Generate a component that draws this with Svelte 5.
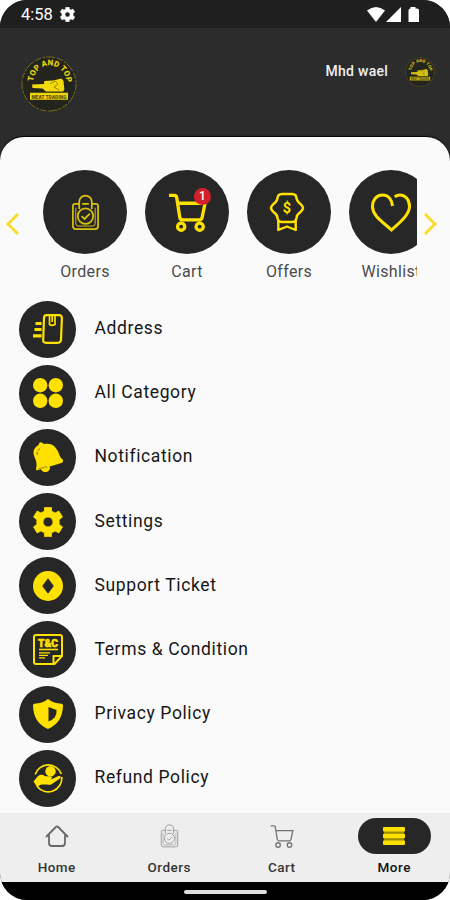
<script>
  const shortcuts = [
    { label: 'Orders', icon: 'bag' },
    { label: 'Cart', icon: 'cart', badge: 1 },
    { label: 'Offers', icon: 'offer' },
    { label: 'Wishlist', icon: 'heart' }
  ];
  const rows = [
    { label: 'Address', icon: 'address' },
    { label: 'All Category', icon: 'category' },
    { label: 'Notification', icon: 'bell' },
    { label: 'Settings', icon: 'gear' },
    { label: 'Support Ticket', icon: 'ticket' },
    { label: 'Terms & Condition', icon: 'terms' },
    { label: 'Privacy Policy', icon: 'shield' },
    { label: 'Refund Policy', icon: 'refund' }
  ];
  const tabs = [
    { label: 'Home', icon: 'home' },
    { label: 'Orders', icon: 'bag' },
    { label: 'Cart', icon: 'cart' },
    { label: 'More', icon: 'more', active: true }
  ];
</script>

{#snippet logo(id, size)}
  <svg width={size} height={size} viewBox="0 0 56 56">
    <circle cx="28" cy="28" r="27" fill="#24241f" stroke="#8d8313" stroke-width=".8" stroke-dasharray="6 1.5 3 1 9 2" />
    <path {id} d="M12.2 25.5 A16.500 16.500 0 0 1 45.200 26.500" fill="none" />
    <text font-family="Roboto, sans-serif" font-weight="900" font-size="8" fill="#e5d012" text-anchor="middle"><textPath href="#{id}" startOffset="50%">TOP AND TOP</textPath></text>
    <path d="M11 28.500l12-.6.300-2.900 8.700-.600 8.500-2 2 2.500.800 8-1 2.600H25l-3.500-3-10-.4z" fill="#f2db08" />
    <path d="M29 28l5-3 3 3-4 3 5 3" fill="none" stroke="#94880f" stroke-width="1" />
    <path d="M9 36.800h38v7H9z" fill="#edd60a" />
    <text x="28" y="42.700" font-family="Roboto, sans-serif" font-weight="900" font-size="6.200" fill="#5b5311" text-anchor="middle" textLength="35" lengthAdjust="spacingAndGlyphs">MEAT TRADING</text>
  </svg>
{/snippet}

{#snippet glyph(name)}
  {#if name === 'bag'}
    <svg class="bag" viewBox="0 0 30 38" fill="none" stroke="currentColor" stroke-width="1.800">
      <path d="M9 10H4.200Q2 10 2 12.200V33q0 3.200 3.200 3.200h19.600q3.200 0 3.200-3.200V12.200Q28 10 25.800 10H21M11.500 10h7" />
      <path d="M5 14v16.500Q5 33 7.500 33h15q2.500 0 2.500-2.500V14" stroke-width="1" />
      <path d="M8.500 15.500V8a6.500 6.500 0 0 1 13 0v7.500" />
      <circle cx="15" cy="22.700" r="8" />
      <path d="m11 22.700 3 3 5.500-5.500" />
    </svg>
  {:else if name === 'cart'}
    <svg class="cart" viewBox="0 0 40 40" fill="none" stroke="currentColor">
      <path d="M1 3h5.500q2 0 2.400 2L12 25q.4 3 3 3h17q2.500 0 3-2.500L38 11H10" />
      <circle cx="13.500" cy="35" r="3.700" /><circle cx="32.500" cy="35" r="3.700" />
    </svg>
  {:else if name === 'offer'}
    <svg class="offer" width="36" height="40" viewBox="0 0 36 40" fill="none" stroke="currentColor" stroke-width="2.500" stroke-linejoin="round">
      <path d="M13 2h10c3.500 0 4 1.500 4.600 4.500.3 2 1 3 2.400 4.200 2.300 1.900 4 3.300 4 5.300s-1.700 3.400-4 5.300c-1.400 1.200-2.100 2.200-2.400 4.200-.6 3-1.100 4.500-4.600 4.500H13c-3.500 0-4-1.500-4.600-4.500-.3-2-1-3-2.400-4.200C3.700 19.400 2 18 2 16s1.700-3.400 4-5.300c1.400-1.200 2.100-2.200 2.400-4.200C9 3.500 9.500 2 13 2z" />
      <path d="M9.300 29v9l8.700-3.500 8.700 3.500v-9" stroke-width="2.400" />
      <text x="18" y="21.300" text-anchor="middle" font-family="Roboto, sans-serif" font-weight="700" font-size="14.500" fill="currentColor" stroke="none">$</text>
    </svg>
  {:else if name === 'heart'}
    <svg width="40" height="40" viewBox="0 0 40 40" fill="none" stroke="currentColor" stroke-width="3">
      <path d="M21.500 14c-.5-5-3-11-10-11-6.500 0-10 5.500-10 11.500C1.500 24 12 30 20.500 38 28 31 38.500 23 38.500 14.500 38.500 8 34.500 3 29 3c-2 0-3.800.6-5.300 1.900" />
    </svg>
  {:else if name === 'address'}
    <svg width="30" height="30" viewBox="0 0 30 30" fill="none" stroke="currentColor" stroke-width="2.200">
      <path d="M13.500 1.200H26q3 0 2.900 3L28 25.800q-.2 3-3.200 3H13q-3 0-2.800-3L11 4.200q.1-3 2.500-3z" />
      <path d="M16.500 1v9.500q2.500 1.800 5.500 0V1M19.200 1v7" stroke-width="1.700" />
      <path d="M2.500 9.500h6M1.500 15.500h7M0 21.800h8.500" stroke-width="3.200" />
    </svg>
  {:else if name === 'category'}
    <svg width="30" height="30" viewBox="0 0 30 30" fill="currentColor">
      <circle cx="7.200" cy="7.200" r="7.200" /><circle cx="22.800" cy="7.200" r="7.200" /><circle cx="7.200" cy="22.800" r="7.200" /><circle cx="22.800" cy="22.800" r="7.200" />
    </svg>
  {:else if name === 'bell'}
    <svg width="30" height="30" viewBox="0 0 30 30" fill="currentColor">
      <path d="M6 1.500Q7.500-.6 9.500 1l1.500 1c7-1.500 12 2 14.500 8.500 1.200 3.500 2 5.200 4.200 7 1 1.600.3 3-1.400 3.500L5.500 28C3.500 28.500 2.500 27.500 3.200 26c.8-4 .3-6.500-1.500-10.500C-1 9.500 1 5.500 5.500 3z" />
      <path d="M8 27 17 24.600C17.500 31 9.500 32 8 27z" />
      <path d="M4.500 13C3.500 10 4.500 7.800 8 6" fill="none" stroke="#58510d" stroke-width=".9" stroke-dasharray="3 1.500" />
      <path d="M5 27l9-2.600" fill="none" stroke="#8a7e0c" stroke-width=".8" />
    </svg>
  {:else if name === 'gear'}
    <svg width="30" height="30" viewBox="0 0 30 30">
      <path fill="currentColor" fill-rule="evenodd" stroke="currentColor" stroke-width=".8" stroke-linejoin="round" d="M11.500.400h7v3.800c1.200.4 2.300 1 3.400 1.900l4-2 3.600 6-3.500 2.700a11 11 0 0 1 0 4.400l3.500 2.700-3.600 6-4-2c-1 .9-2.200 1.500-3.400 1.900v3.800h-7v-3.800a11 11 0 0 1-3.400-1.900l-4 2-3.600-6L4 17.200a11 11 0 0 1 0-4.400L.5 10.100l3.600-6 4 2c1-.9 2.200-1.500 3.400-1.900zM15 10a5 5 0 1 0 0 10 5 5 0 0 0 0-10z" />
    </svg>
  {:else if name === 'ticket'}
    <svg width="30" height="30" viewBox="0 0 30 30">
      <circle cx="15" cy="15" r="15" fill="currentColor" />
      <path d="M15 7.300 20.800 15 15 22.700 9.200 15z" fill="#272727" />
    </svg>
  {:else if name === 'terms'}
    <svg width="30" height="31" viewBox="0 0 30 31" fill="none" stroke="currentColor" stroke-width="2">
      <path d="M3 1h24q2 0 2 2v19l-7.500 8H3q-2 0-2-2V3q0-2 2-2zM20.500 29.500V22H29" stroke-linejoin="round" />
      <path d="M6 15.500h19" stroke-width="1.600" /><path d="M6 18.800h11M6 21.300h9M6 23.800h6" stroke-width="1.200" />
      <text x="15" y="12.500" text-anchor="middle" textLength="20" lengthAdjust="spacingAndGlyphs" font-family="Roboto, sans-serif" font-size="10" font-weight="900" fill="currentColor" stroke="currentColor" stroke-width=".5">T&amp;C</text>
    </svg>
  {:else if name === 'shield'}
    <svg width="30" height="30" viewBox="0 0 30 30">
      <path d="M15 0c4 3.300 8 4.500 13.500 4.700 1 0 1.500.8 1.500 2C29.600 18 25 25.500 15 30 5 25.500.4 18 0 6.700c0-1.200.5-2 1.500-2C7 4.500 11 3.300 15 0z" fill="currentColor" />
      <path d="M15.500 8 23.500 11q.3 4.800-1.700 7.300-2 2.400-6.300 4.300z" fill="#272727" />
    </svg>
  {:else if name === 'refund'}
    <svg width="30" height="30" viewBox="0 0 30 30" fill="none" stroke="currentColor">
      <path d="M2.200 11.500A13.800 13.800 0 0 1 28.300 11M28.800 14A13.800 13.800 0 0 1 4 23.300" stroke-width="1.700" />
      <circle cx="17.500" cy="8.300" r="5.200" fill="currentColor" stroke="none" />
      <path d="M.5 18.500 5 13c3-2 5-1.500 7.500.3h5c2 .2 2 2.300 0 2.800h-4 5.500l6.500-3c2-.7 3.200.8 1.500 2.300l-8 5.600c-1.500 1-3 1-5 .5H8l-4 2.500z" fill="currentColor" stroke="none" />
    </svg>
  {:else if name === 'home'}
    <svg width="24" height="22" viewBox="0 0 24 22" fill="none" stroke="#686868" stroke-width="1.800" stroke-linecap="round" stroke-linejoin="round">
      <path d="M1.500 11.500 10.800 2q1.200-1 2.400 0l9.300 9.500M4 10v8q0 3 3 3h10q3 0 3-3v-8" />
    </svg>
  {:else if name === 'more'}
    <svg width="22" height="18" viewBox="0 0 22 18">
      <path d="M.8 2h20.400v14H.8z" fill="#9a8b0b" />
      <g fill="currentColor"><rect width="22" height="4.600" rx="1" /><rect y="6.700" width="22" height="4.600" rx="1" /><rect y="13.400" width="22" height="4.600" rx="1" /></g>
    </svg>
  {/if}
{/snippet}

<div class="phone">
  <div class="status">
    <span class="time">4:58</span>
    <svg width="15" height="15" viewBox="0 0 30 30"><path fill="#fff" stroke="#fff" stroke-width="1" stroke-linejoin="round" fill-rule="evenodd" d="M11.500.500h7v3.700c1.200.4 2.300 1 3.400 1.900l4-2 3.600 6-3.500 2.700a11 11 0 0 1 0 4.400l3.500 2.700-3.600 6-4-2c-1 .9-2.200 1.500-3.400 1.900v3.700h-7v-3.700a11 11 0 0 1-3.400-1.900l-4 2-3.600-6L4 17.200a11 11 0 0 1 0-4.400L.5 10.100l3.600-6 4 2c1-.9 2.200-1.500 3.400-1.900zM15 10a5 5 0 1 0 0 10 5 5 0 0 0 0-10z" /></svg>
    <svg class="signals" width="53" height="17" viewBox="0 0 53 17" fill="#fff">
      <path d="M0 4.500Q9-2.500 18 4.500L9 16z" /><path d="M34 1v15H19z" /><path d="M43.500 1h5v1.500H50q2 0 2 2V16H41.500V4.500q0-2 2-2z" />
    </svg>
  </div>

  <header>
    {@render logo('arc-brand', 56)}
    <span class="user">Mhd wael</span>
    <span class="avatar">{@render logo('arc-avatar', 30)}</span>
  </header>

  <main>
    <section class="carousel">
      <svg class="arrow" width="13" height="22" viewBox="0 0 13 22"><path d="M12 1 2 11l10 10" /></svg>
      <div class="track">
        {#each shortcuts as s}
          <div class="shortcut">
            <div class="disc">
              {@render glyph(s.icon)}
              {#if s.badge}<span class="badge">{s.badge}</span>{/if}
            </div>
            <span>{s.label}</span>
          </div>
        {/each}
      </div>
      <svg class="arrow" width="13" height="22" viewBox="0 0 13 22"><path d="M1 1 11 11 1 21" /></svg>
    </section>

    <ul>
      {#each rows as r}
        <li><span class="dot">{@render glyph(r.icon)}</span><span class="name">{r.label}</span></li>
      {/each}
    </ul>
  </main>

  <nav>
    {#each tabs as t}
      <div class="tab" class:active={t.active}>
        <span class="pill">{@render glyph(t.icon)}</span>
        <span>{t.label}</span>
      </div>
    {/each}
  </nav>
  <div class="gesture"><i></i></div>
</div>

<style>
  :global(body) { background: #fff; }
  .phone {
    width: 450px; height: 900px; overflow: hidden;
    display: flex; flex-direction: column;
    border-radius: 27px; background: #2c2c2c;
    font-family: Roboto, sans-serif; box-sizing: border-box;
  }
  svg { display: block; flex: none; }
  .status { height: 28px; flex: none; background: #1f1f1f; display: flex; align-items: center; padding: 1px 30px 0 21px; box-sizing: border-box; color: #fff; }
  .time { font-size: 16.5px; line-height: 28px; width: 39px; }
  .signals { margin-left: auto; }
  header { height: 109px; flex: none; display: flex; align-items: flex-start; padding: 28px 15px 0 21px; box-sizing: border-box; }
  .user { margin: 6px 17px 0 auto; font-size: 14px; line-height: 18px; font-weight: 500; color: #f0f0f0; letter-spacing: .25px; }
  .avatar { opacity: .85; margin-top: 1px; }
  main { flex: 1; min-height: 0; background: #fafafa; border-radius: 24px 24px 0 0; box-shadow: 0 -1px 1px #050505; overflow: hidden; }
  .carousel { display: flex; height: 153px; padding: 33px 6px 0; box-sizing: border-box; }
  .arrow { margin-top: 43px; fill: none; stroke: #fddb22; stroke-width: 2.800; }
  .track { width: 384px; margin: 0 7px 0 14px; flex: none; display: flex; gap: 18px; overflow: hidden; padding-left: 10px; box-sizing: border-box; }
  .shortcut { flex: none; width: 84px; display: flex; flex-direction: column; align-items: center; font-size: 16px; line-height: 20px; letter-spacing: .35px; color: #4b4b4b; }
  .disc { width: 84px; height: 84px; border-radius: 50%; background: #272727; color: #ffe100; display: flex; align-items: center; justify-content: center; position: relative; margin-bottom: 8px; }
  .disc :global(.bag) { width: 29px; height: 37px; color: #d9c112; }
  .disc :global(.cart) { width: 39px; height: 40px; stroke-width: 3.400; }
  .disc :global(.offer) { margin-right: 5px; }
  .badge { position: absolute; left: 49px; top: 18px; width: 17px; height: 17px; border-radius: 50%; background: #d3202a; color: #fff; font-size: 12px; line-height: 17px; font-weight: 500; text-align: center; letter-spacing: 0; }
  ul { list-style: none; margin: 0; padding: 10.500px 0 0 19px; display: flex; flex-direction: column; gap: 7.200px; }
  li { display: flex; align-items: center; height: 57px; flex: none; }
  .dot { width: 57px; height: 57px; border-radius: 50%; background: #272727; color: #ffe100; display: flex; align-items: center; justify-content: center; flex: none; }
  .name { margin: -2px 0 0 18.500px; font-size: 17.500px; line-height: 24px; letter-spacing: .62px; color: #161616; }
  nav { height: 69px; flex: none; background: #eee; display: flex; }
  .tab { flex: 1; display: flex; flex-direction: column; align-items: center; padding: 5px 0 0 1px; font-size: 13.500px; line-height: 18px; font-weight: 500; letter-spacing: .5px; color: #353535; }
  .pill { width: 73px; height: 36px; border-radius: 18px; display: flex; align-items: center; justify-content: center; margin-bottom: 4px; color: #747474; }
  .active { color: #111; }
  .active .pill { background: #272727; color: #ffe100; }
  .pill :global(.bag) { width: 19px; height: 24px; color: #999; stroke-width: 1.500; }
  .pill :global(.cart) { width: 24px; height: 24px; stroke-width: 2.200; }
  .gesture { height: 18px; flex: none; background: #000; display: flex; justify-content: center; padding-top: 8px; box-sizing: border-box; }
  .gesture i { width: 83px; height: 3.500px; border-radius: 2px; background: #dedede; }
</style>
